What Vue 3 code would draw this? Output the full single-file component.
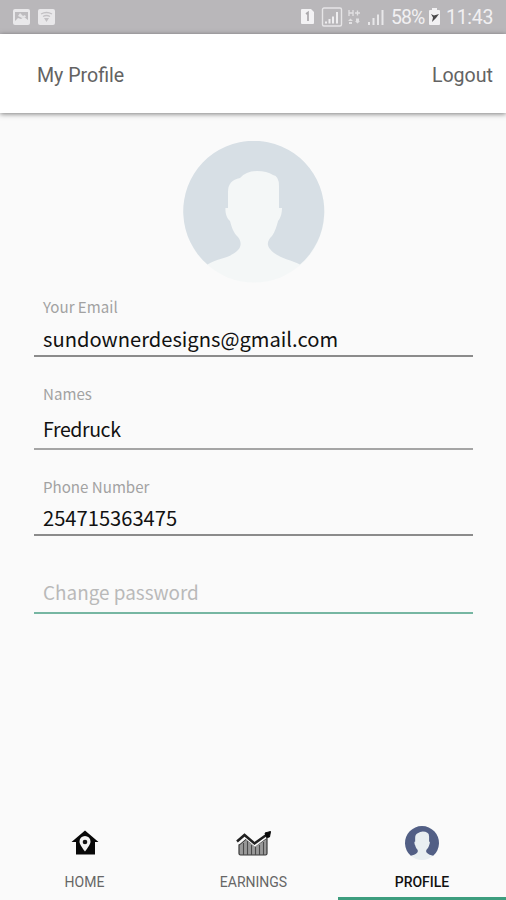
<script setup>
const fields = [
  { key: 'email', label: 'Your Email', value: 'sundownerdesigns@gmail.com' },
  { key: 'names', label: 'Names', value: 'Fredruck' },
  { key: 'phone', label: 'Phone Number', value: '254715363475' },
]
</script>

<template>
  <div class="screen">
    <div class="status">
      <svg class="left-icons" width="48" height="18" viewBox="0 0 48 18">
        <rect x="1" y="1" width="17" height="16" rx="2" fill="#e9e8ea" />
        <path d="M3 4h13v8l-4-3-3 2-3-1-3 3z" fill="#bdbbbe" />
        <path d="M6 8l2-3 3 3 2-1 1 2-4 1z" fill="#e5e4e6" />
        <rect x="26" y="1" width="17" height="16" rx="2" fill="#e9e8ea" />
        <path d="M29 6q5.500-3 11 0M31 8.500q3.500-2 7 0" fill="none" stroke="#c3c1c4" stroke-width="1.300" />
        <path d="M32 10h5l-2.500 4z" fill="#c3c1c4" />
      </svg>
      <div class="status-right">
        <svg width="88" height="20" viewBox="0 0 88 20">
          <path d="M3 2h9l3 3v11q0 1-1 1H3q-1 0-1-1V3q0-1 1-1z" fill="#f3f2f4" />
          <path d="M7 7l2-1.500v8.500" fill="none" stroke="#aaa8ab" stroke-width="1.700" />
          <rect x="23.500" y="1" width="19" height="18" rx="1.500" fill="none" stroke="#e6e5e7" stroke-width="1.400" />
          <path d="M27 14.500v2M30.500 12v4.500M34 9.500v7M38 5v11.500" stroke="#efeef0" stroke-width="2" />
          <path d="M50 3v6M54 3v6M50 6h4M56 6h5M58.500 3.500v5" stroke="#e2e1e3" stroke-width="1.300" />
          <path d="M49 14l2.500-2.500 2.500 2.500zM50 15h3v2h-3zM56 14l2.500 2.500L61 14zM57 11.500h3V14h-3z" fill="#e2e1e3" />
          <path d="M70 15v3M74.500 11v7M79 7.500V18M83.500 3v15" stroke="#e8e7e9" stroke-width="2" />
        </svg>
        <span class="percent">58%</span>
        <svg class="battery" width="13" height="18" viewBox="0 0 13 18">
          <path d="M4 0h5v2h2q1 0 1 1v13q0 1-1 1H2q-1 0-1-1V3q0-1 1-1h2z" fill="#f2f1f3" />
          <path d="M3 6l3 1.500L11 6l-3 4-4 4 1-4.500z" fill="#4a494b" />
        </svg>
        <span class="clock">11:43</span>
      </div>
    </div>

    <header class="bar">
      <span class="title">My Profile</span>
      <span class="logout">Logout</span>
    </header>

    <main class="content">
      <svg class="avatar" width="142" height="142" viewBox="0 0 142 142">
        <circle cx="71" cy="71" r="70.500" fill="#f4f7f7" />
        <path d="M24.500 123.500A70.500 70.500 0 1 1 117 123.500C106 118 94 117 87 108C83 103 85 99 89 95C92 91 94 84 95 80C98 77 99 71 99 67H96V45Q96 35 90 34Q84 30 74 30Q63 30 57 37Q45 39 45 51V67H42.500C42 72 44 78 47 80C49 87 50 91 55 96C59 101 58 106 55 109C46 118 35 117 24.500 123.500Z" fill="#d7dfe5" />
      </svg>

      <div v-for="f in fields" :key="f.key" class="field" :class="f.key">
        <div class="label">{{ f.label }}</div>
        <div class="value"><span>{{ f.value }}</span></div>
      </div>
      <div class="field password">
        <div class="placeholder">Change password</div>
      </div>
    </main>

    <nav class="tabs">
      <div class="tab">
        <svg class="icon" width="36" height="36" viewBox="0 0 36 36">
          <path d="M18 5.500L31.500 17H28V29.500H9V17H4.500z" fill="#080808" />
          <path d="M18 26.500C15.500 23 12.500 19.500 12.500 16.500A5.500 5.500 0 0 1 23.500 16.500C23.500 19.500 20.500 23 18 26.500z" fill="#f5f5f5" />
          <circle cx="18" cy="17" r="2.300" fill="#151515" />
        </svg>
        <span class="home-label">HOME</span>
      </div>
      <div class="tab">
        <svg class="icon" width="36" height="36" viewBox="0 -1 36 36">
          <path d="M3 19L10 13L19 20L31 12V27.500Q31 29 29.500 29H4.500Q3 29 3 27.500z" fill="#999" stroke="#383838" stroke-width="1.200" />
          <path d="M7.500 17v12M11.500 15v14M15.500 19v10M19.500 21v8M23.500 19v10M27.500 16v13" stroke="#4a4a4a" stroke-width="1.100" />
          <path d="M2 16.500L9.500 10L19 18L31 9" fill="none" stroke="#fafafa" stroke-width="4.500" />
          <path d="M1 15.500L8.500 9L18.500 17.500L31 8.500" fill="none" stroke="#202020" stroke-width="2.500" />
          <path d="M29 7l5.500-1.500-1 5.500-3 .5z" fill="#080808" stroke="#080808" />
        </svg>
        <span class="earn-label">EARNINGS</span>
      </div>
      <div class="tab active">
        <svg class="icon" width="36" height="36" viewBox="0 0 142 142">
          <circle cx="71" cy="71" r="67" fill="#e9eff1" />
          <path d="M27 121.500A67 67 0 1 1 115 121.500C106 118 96 117 89 108C86 103 87 99 91 95C95 91 98 84 99 80C101 77 102 71 102 66H99V45Q99 34 92 31Q85 26 74 26Q63 26 56 32Q44 36 44 51V66H41C41 72 42 78 44 80C46 87 48 91 52 96C56 101 55 106 52 109C44 118 36 117 27 121.500Z" fill="#525f85" />
        </svg>
        <span class="profile-label">PROFILE</span>
      </div>
    </nav>
  </div>
</template>

<style>
body {
  margin: 0;
  background: #fafafa;
}
</style>

<style scoped>
.screen {
  width: 506px;
  height: 900px;
  display: flex;
  flex-direction: column;
  overflow: hidden;
  background: #fafafa;
  font-family: Roboto, "Liberation Sans", sans-serif;
}
.screen svg {
  display: block;
  flex: none;
}
.status {
  height: 34px;
  flex: none;
  box-sizing: border-box;
  padding: 0 13px 0 12px;
  display: flex;
  align-items: center;
  justify-content: space-between;
  background: #b9b7ba;
  color: #f1f0f2;
  white-space: nowrap;
}
.status-right {
  display: flex;
  align-items: center;
  font-size: 19.5px;
  line-height: 34px;
}
.percent {
  width: 34px;
  margin-left: 4px;
  padding-top: 1px;
  letter-spacing: -1px;
}
.battery {
  margin: 0 5px 0 3px;
}
.clock {
  width: 47px;
  padding-top: 1px;
  letter-spacing: -0.3px;
}
.bar {
  height: 79px;
  flex: none;
  box-sizing: border-box;
  padding: 3px 13px 0 37px;
  display: flex;
  align-items: center;
  justify-content: space-between;
  background: #fff;
  color: #636363;
  font-size: 19.6px;
  box-shadow: 0 1px 5px rgba(0, 0, 0, 0.5);
}
.content {
  flex: 1;
  display: flex;
  flex-direction: column;
  padding: 28px 33px 0 34px;
  font-family: "Noto Sans CJK SC", "Noto Sans", sans-serif;
}
.avatar {
  align-self: center;
  margin-bottom: 13px;
}
.field {
  display: flex;
  flex-direction: column;
  box-sizing: border-box;
  padding-left: 9px;
  border-bottom: 2px solid #8b8b8b;
}
.label {
  height: 20px;
  line-height: 20px;
  font-size: 15.1px;
  color: #a2a2a2;
}
.value {
  height: 28px;
  line-height: 28px;
  font-size: 20.15px;
  color: #111;
}
.email {
  height: 61px;
}
.email .value {
  margin-top: 9px;
}
.names {
  height: 93px;
  padding-top: 26px;
  border-bottom-color: #a5a5a5;
}
.names .value {
  margin-top: 12px;
  font-size: 19.5px;
  letter-spacing: -0.4px;
}
.phone {
  height: 86px;
  padding-top: 26px;
}
.phone .value {
  margin-top: 8px;
}
.password {
  height: 78px;
  padding-top: 42px;
  border-bottom-color: #76b6a2;
}
.placeholder {
  height: 28px;
  line-height: 28px;
  font-size: 18.9px;
  color: #b9b9b9;
}
.tabs {
  height: 78px;
  flex: none;
  display: grid;
  grid-template-columns: 169px 169px 168px;
}
.tab {
  display: flex;
  flex-direction: column;
  align-items: center;
  box-sizing: border-box;
  padding-top: 3px;
  border-bottom: 3px solid transparent;
  color: #666;
  font-size: 14px;
  line-height: 20px;
}
.tab span {
  margin-top: 11px;
}
.active {
  color: #111;
  font-weight: 500;
  border-bottom-color: #3d9d7e;
}
</style>
